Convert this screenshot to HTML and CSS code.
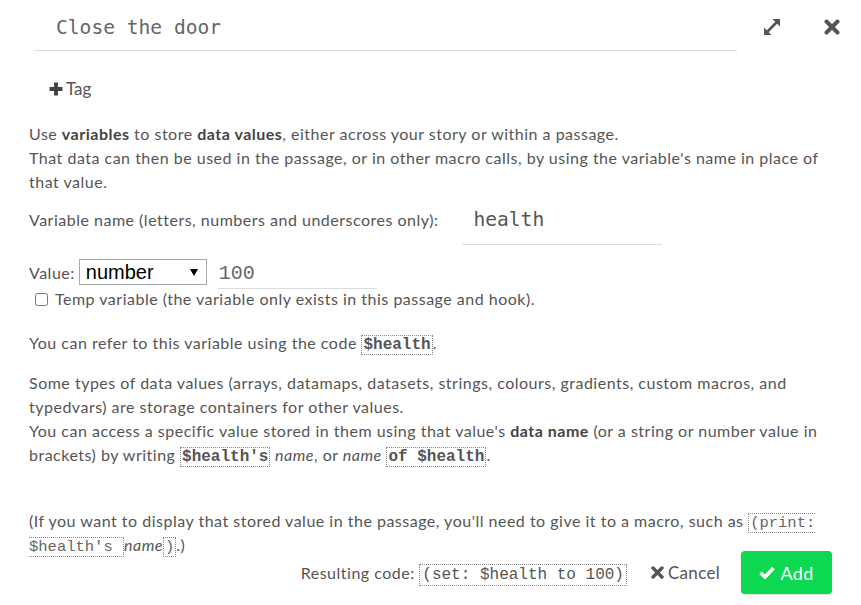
FILE: index.html
```html
<!DOCTYPE html>
<html lang="en">
<head>
<meta charset="utf-8">
<title>Set variable</title>
<link rel="stylesheet" href="styles.css">
</head>
<body>
<div class="dialog">
  <header class="dialog-head">
    <div class="title-input">Close the door</div>
    <button class="icon-btn expand" aria-label="Maximize">
      <svg width="20" height="20" viewBox="0 0 20 20"><path d="M3.5 16.5 L16.5 3.5" stroke="#555" stroke-width="2.6" fill="none"/><path d="M10.5 2 L18 2 L18 9.5 Z" fill="#555"/><path d="M2 10.5 L2 18 L9.5 18 Z" fill="#555"/></svg>
    </button>
    <button class="icon-btn close" aria-label="Close">
      <svg width="16" height="16" viewBox="0 0 16 16"><path d="M2.5 2.5 L13.5 13.5 M13.5 2.5 L2.5 13.5" stroke="#555" stroke-width="4" stroke-linecap="round" fill="none"/></svg>
    </button>
  </header>

  <div class="dialog-body">
    <div class="tags">
      <button class="tag-btn"><svg width="14" height="14" viewBox="0 0 14 14"><path d="M5 0.5 H9 V5 H13.5 V9 H9 V13.5 H5 V9 H0.5 V5 H5 Z" fill="#444"/></svg>Tag</button>
    </div>

    <p class="intro">Use <b>variables</b> to store <b>data values</b>, either across your story or within a passage.<br>That data can then be used in the passage, or in other macro calls, by using the variable's name in place of that value.</p>

    <div class="row name-row">
      <span class="label">Variable name (letters, numbers and underscores only):</span>
      <div class="name-input">health</div>
    </div>

    <div class="row value-row">
      <span class="label">Value:</span>
      <span class="select-wrap"><select class="type-select"><option>number</option></select></span>
      <div class="value-input">100</div>
    </div>

    <label class="check-row"><input type="checkbox" class="check">Temp variable (the variable only exists in this passage and hook).</label>

    <p class="refer">You can refer to this variable using the code <code class="bold">$health</code>.</p>

    <p class="types">Some types of data values (arrays, datamaps, datasets, strings, colours, gradients, custom macros, and typedvars) are storage containers for other values.<br>You can access a specific value stored in them using that value's <b>data name</b> (or a string or number value in brackets) by writing <code class="bold">$health's</code> <i>name</i>, or <i>name</i> <code class="bold">of $health</code>.</p>

    <p class="display">(If you want to display that stored value in the passage, you'll need to give it to a macro, such as <code class="light">(print: $health's </code><i>name</i><code class="light">)</code>.)</p>
  </div>

  <footer class="dialog-foot">
    <span class="result">Resulting code: <code class="result-code">(set: $health to 100)</code></span>
    <button class="cancel-btn"><svg width="13" height="13" viewBox="0 0 16 16"><path d="M2.5 2.5 L13.5 13.5 M13.5 2.5 L2.5 13.5" stroke="#555" stroke-width="4.2" stroke-linecap="round" fill="none"/></svg>Cancel</button>
    <button class="add-btn"><svg width="16" height="13" viewBox="0 0 16 13"><path d="M1.5 6.8 L6 11 L14.5 2" stroke="#fff" stroke-width="3.6" fill="none" stroke-linejoin="miter"/></svg>Add</button>
  </footer>
</div>
</body>
</html>
```

FILE: styles.css
```css
html, body {
  margin: 0;
  padding: 0;
  background: #fff;
}

body {
  font-family: Lato, "Noto Sans", sans-serif;
  font-size: 16px;
  letter-spacing: 0.5px;
  color: #555;
}

.dialog {
  height: 605px;
  display: flex;
  flex-direction: column;
  padding: 0 29px;
  box-sizing: border-box;
}

.dialog-head {
  display: flex;
  align-items: center;
  padding-top: 5px;
  margin-left: 5px;
  letter-spacing: 0;
}

.title-input {
  flex: 1;
  height: 46px;
  box-sizing: border-box;
  border-bottom: 1px solid #dcdcdc;
  display: flex;
  align-items: center;
  padding-left: 22px;
  font-family: "DejaVu Sans Mono", monospace;
  font-size: 19.6px;
  color: #666;
}

.icon-btn {
  background: none;
  border: 0;
  padding: 0;
  display: flex;
  cursor: pointer;
  margin-bottom: 3px;
}

.expand { margin-left: 25px; }
.close { margin-left: 42px; margin-right: -8px; }

.dialog-body {
  flex: 1;
  min-height: 0;
}

.tags {
  margin-top: 26px;
  line-height: 24px;
}

.tag-btn {
  background: none;
  border: 0;
  padding: 0;
  margin-left: 20px;
  font: inherit;
  font-size: 17px;
  letter-spacing: 0;
  color: #555;
  display: inline-flex;
  align-items: center;
  gap: 3px;
}

p {
  margin: 0;
  line-height: 24px;
}

b { color: #444; }

.intro { margin-top: 20px; }

.row {
  display: flex;
  align-items: baseline;
}

.name-row { margin-top: 12px; }

.name-input {
  width: 200px;
  margin-left: 24px;
  box-sizing: border-box;
  padding: 2px 11px 12px;
  line-height: 24px;
  border-bottom: 1px solid #dcdcdc;
  font-family: "DejaVu Sans Mono", monospace;
  font-size: 19.6px;
  letter-spacing: 0;
  color: #555;
}

.value-row { margin-top: 14px; }

.select-wrap {
  position: relative;
  margin-left: 4px;
}

.type-select {
  appearance: none;
  -webkit-appearance: none;
  width: 128px;
  height: 26px;
  box-sizing: border-box;
  border: 1px solid #a9a9a9;
  border-radius: 0;
  background: #fff;
  padding: 0 0 0 6px;
  font-family: "Liberation Sans", Arial, sans-serif;
  font-size: 20px;
  letter-spacing: 0;
  color: #000;
}

.select-wrap::after {
  content: "";
  position: absolute;
  right: 9px;
  top: 50%;
  margin-top: -3px;
  border-left: 4px solid transparent;
  border-right: 4px solid transparent;
  border-top: 7px solid #000;
}

.value-input {
  width: 159px;
  margin-left: 11px;
  box-sizing: border-box;
  padding: 2px 1px 2px;
  line-height: 24px;
  border-bottom: 1px solid #dcdcdc;
  font-family: "Liberation Mono", monospace;
  font-size: 20px;
  letter-spacing: 0;
  color: #666;
}

.check-row {
  display: flex;
  align-items: center;
  line-height: 20px;
  height: 20px;
}

.check {
  width: 13px;
  height: 13px;
  margin: 0 7px 0 6px;
}

.refer { margin-top: 22px; }
.types { margin-top: 16px; }
.display { margin-top: 42px; }

code {
  font-family: "Liberation Mono", "Courier New", monospace;
  font-size: 16px;
  line-height: 1;
  letter-spacing: 0;
  border: 1px dotted #888;
  padding: 0 1px;
}

code.bold { font-weight: bold; color: #555; }
code.light { color: #666; font-size: 15.5px; }

.dialog-foot {
  flex-shrink: 0;
  display: flex;
  justify-content: flex-end;
  align-items: center;
  padding: 0 0 11px;
  height: 54px;
  box-sizing: border-box;
}

.result {
  margin-right: 24px;
}

.result-code {
  color: #555;
  font-weight: normal;
  padding: 1px 2px;
}

.cancel-btn {
  background: none;
  border: 0;
  padding: 0;
  font: inherit;
  font-size: 17px;
  letter-spacing: 0.3px;
  color: #555;
  display: inline-flex;
  align-items: center;
  gap: 4px;
  margin-right: 21px;
}

.add-btn {
  width: 91px;
  height: 43px;
  border: 0;
  border-radius: 4px;
  background: #0dd852;
  color: #fff;
  font: inherit;
  font-size: 18px;
  letter-spacing: 0.3px;
  display: inline-flex;
  align-items: center;
  justify-content: center;
  gap: 5px;
  box-shadow: 0 1px 2px rgba(0,0,0,0.15);
}
```
